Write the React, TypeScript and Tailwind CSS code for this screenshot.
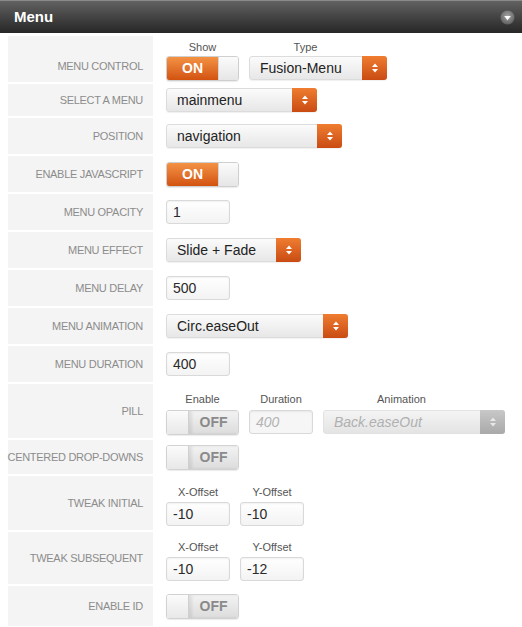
import React from 'react';

const Arrows = ({ color = '#fff' }: { color?: string }) => (
  <svg width="8" height="12" viewBox="0 0 8 12">
    <path d="M4 1.5 L7 5 H1 Z" fill={color} />
    <path d="M4 10.5 L7 7 H1 Z" fill={color} />
  </svg>
);

const ToggleOn = () => (
  <div className="flex h-[25px] w-[73px] overflow-hidden rounded-[3px] border border-[#cfcfcf] shadow-[0_1px_1px_rgba(0,0,0,0.08)]">
    <div className="flex w-[51px] items-center justify-center bg-linear-to-b from-[#f39243] to-[#d2520e] text-[14px] font-bold text-white">
      ON
    </div>
    <div className="flex-1 border-l border-[#d6d6d6] bg-linear-to-b from-[#fbfbfb] to-[#e6e6e6]" />
  </div>
);

const ToggleOff = () => (
  <div className="flex h-[25px] w-[73px] overflow-hidden rounded-[3px] border border-[#d2d2d2] shadow-[0_1px_1px_rgba(0,0,0,0.08)]">
    <div className="w-[22px] border-r border-[#d0d0d0] bg-linear-to-b from-[#fbfbfb] to-[#e8e8e8]" />
    <div className="flex flex-1 items-center justify-center bg-linear-to-b from-[#f3f3f3] to-[#dcdcdc] text-[14px] font-bold text-[#8a8a8a] shadow-[inset_3px_0_3px_rgba(0,0,0,0.08)]">
      OFF
    </div>
  </div>
);

const Select = ({ value, width }: { value: string; width: string }) => (
  <div className={`flex h-6 ${width} rounded-[3px] border border-[#dcdcdc] bg-linear-to-b from-[#fbfbfb] to-[#e7e7e7] shadow-[0_1px_1px_rgba(0,0,0,0.06)]`}>
    <div className="flex flex-1 items-center pl-2.5 text-[14px] text-[#222]">{value}</div>
    <div className="-my-px -mr-px flex w-[25px] items-center justify-center rounded-r-[3px] bg-linear-to-b from-[#ef7d30] to-[#c94b12]">
      <Arrows />
    </div>
  </div>
);

const DisabledSelect = ({ value }: { value: string }) => (
  <div className="flex h-6 w-[182px] rounded-[3px] border border-[#e2e2e2] bg-linear-to-b from-[#f4f4f4] to-[#e4e4e4]">
    <div className="flex flex-1 items-center pl-2.5 text-[14px] italic text-[#b0b0b0]">{value}</div>
    <div className="-my-px -mr-px flex w-[25px] items-center justify-center rounded-r-[3px] bg-linear-to-b from-[#c8c8c8] to-[#a9a9a9]">
      <Arrows color="#e8e8e8" />
    </div>
  </div>
);

const Input = ({ value, disabled }: { value: string; disabled?: boolean }) => (
  <div
    className={`flex h-6 w-16 items-center rounded-[3px] border border-[#d9d9d9] pl-1.5 text-[14px] shadow-[inset_0_1px_2px_rgba(0,0,0,0.06)] ${
      disabled ? 'bg-[#f6f6f6] italic text-[#b3b3b3]' : 'bg-linear-to-b from-white to-[#f3f3f3] text-[#2a2a2a]'
    }`}
  >
    {value}
  </div>
);

const Caption = ({ children, className = '' }: { children: React.ReactNode; className?: string }) => (
  <div className={`text-center text-[11px] leading-[13px] text-[#555] ${className}`}>{children}</div>
);

const Row = ({
  label,
  height,
  labelClass = '',
  children,
}: {
  label: string;
  height: string;
  labelClass?: string;
  children: React.ReactNode;
}) => (
  <div className={`flex ${height}`}>
    <div
      className={`flex w-[145px] shrink-0 items-center justify-end whitespace-nowrap bg-[#f4f4f4] pr-[10px] text-[11px] uppercase tracking-[-0.3px] text-[#8c8c8c] ${labelClass}`}
    >
      {label}
    </div>
    <div className="flex flex-1 items-center pl-[13px]">{children}</div>
  </div>
);

export default function App() {
  return (
    <div className="h-[627px] w-[522px] overflow-hidden bg-white font-['Liberation_Sans',Arial,sans-serif]">
      <div className="flex h-[33px] items-center justify-between border-t border-[#8a8a8a] bg-linear-to-b from-[#626262] to-[#272727] px-[14px]">
        <span className="text-[15px] font-bold text-white">Menu</span>
        <svg width="15" height="15" viewBox="0 0 15 15" className="-mr-[7px]">
          <defs>
            <radialGradient id="g" cx="50%" cy="40%" r="60%">
              <stop offset="0%" stopColor="#a5a5a5" />
              <stop offset="100%" stopColor="#5f5f5f" />
            </radialGradient>
          </defs>
          <circle cx="7.5" cy="7.5" r="7" fill="url(#g)" />
          <path d="M4.2 6 H10.8 L7.5 10.3 Z" fill="#fff" />
        </svg>
      </div>

      <div className="flex flex-col gap-[2px] pl-2 pt-[3px]">
        <Row label="Menu Control" height="h-[46px]" labelClass="pt-[14px]">
          <div className="flex gap-2.5 self-start pt-[5px]">
            <div className="flex flex-col gap-[2px]">
              <Caption>Show</Caption>
              <ToggleOn />
            </div>
            <div className="flex flex-col gap-[2px]">
              <Caption className="pr-[25px]">Type</Caption>
              <Select value="Fusion-Menu" width="w-[138px]" />
            </div>
          </div>
        </Row>
        <Row label="Select a Menu" height="h-[32px]">
          <Select value="mainmenu" width="w-[151px]" />
        </Row>
        <Row label="Position" height="h-[36px]">
          <Select value="navigation" width="w-[176px]" />
        </Row>
        <Row label="Enable Javascript" height="h-[36px]">
          <ToggleOn />
        </Row>
        <Row label="Menu Opacity" height="h-[36px]">
          <Input value="1" />
        </Row>
        <Row label="Menu Effect" height="h-[36px]">
          <Select value="Slide + Fade" width="w-[135px]" />
        </Row>
        <Row label="Menu Delay" height="h-[36px]">
          <Input value="500" />
        </Row>
        <Row label="Menu Animation" height="h-[36px]">
          <Select value="Circ.easeOut" width="w-[182px]" />
        </Row>
        <Row label="Menu Duration" height="h-[36px]">
          <Input value="400" />
        </Row>
        <Row label="Pill" height="h-[54px]">
          <div className="flex gap-2.5 self-start pt-[9px]">
            <div className="flex flex-col gap-[4px]">
              <Caption>Enable</Caption>
              <ToggleOff />
            </div>
            <div className="flex flex-col gap-[4px]">
              <Caption>Duration</Caption>
              <Input value="400" disabled />
            </div>
            <div className="flex flex-col gap-[4px]">
              <Caption className="pr-[25px]">Animation</Caption>
              <DisabledSelect value="Back.easeOut" />
            </div>
          </div>
        </Row>
        <Row label="Centered Drop-Downs" height="h-[34px]">
          <ToggleOff />
        </Row>
        <Row label="Tweak Initial" height="h-[54px]">
          <div className="flex gap-2.5 self-start pt-[10px]">
            <div className="flex flex-col gap-[3px]">
              <Caption>X-Offset</Caption>
              <Input value="-10" />
            </div>
            <div className="flex flex-col gap-[3px]">
              <Caption>Y-Offset</Caption>
              <Input value="-10" />
            </div>
          </div>
        </Row>
        <Row label="Tweak Subsequent" height="h-[52px]">
          <div className="flex gap-2.5 self-start pt-[9px]">
            <div className="flex flex-col gap-[3px]">
              <Caption>X-Offset</Caption>
              <Input value="-10" />
            </div>
            <div className="flex flex-col gap-[3px]">
              <Caption>Y-Offset</Caption>
              <Input value="-12" />
            </div>
          </div>
        </Row>
        <Row label="Enable ID" height="h-[40px]">
          <ToggleOff />
        </Row>
      </div>
    </div>
  );
}
